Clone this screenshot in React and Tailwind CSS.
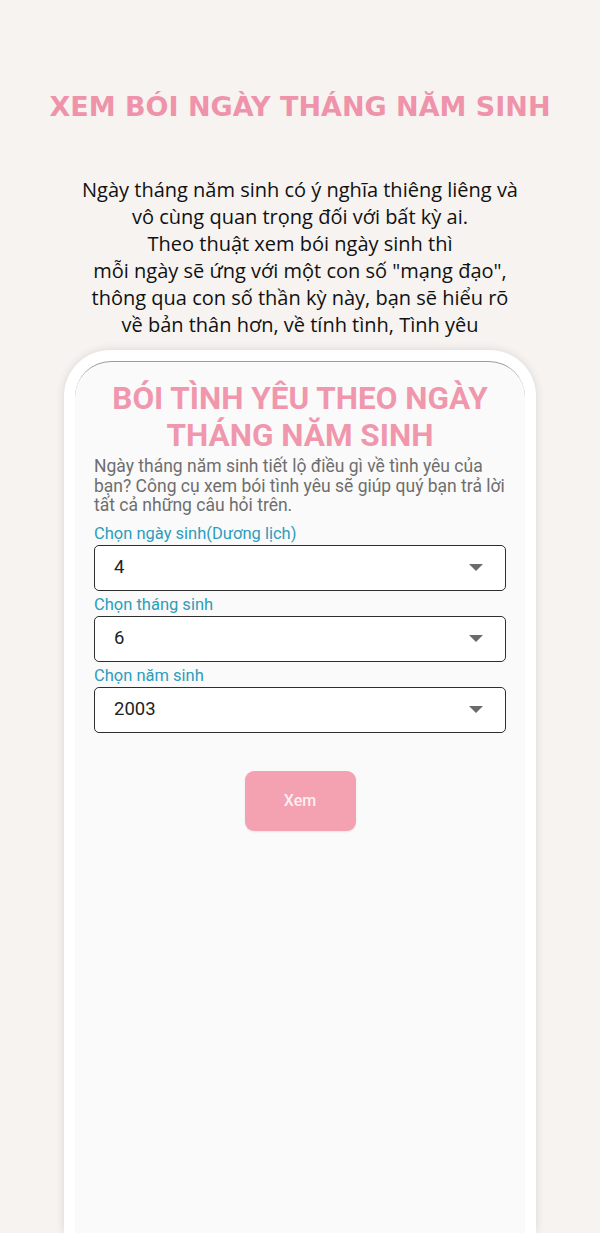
import React from 'react';

const fields = [
    { label: 'Chọn ngày sinh(Dương lịch)', value: '4' },
    { label: 'Chọn tháng sinh', value: '6' },
    { label: 'Chọn năm sinh', value: '2003' },
];

const intro = [
    'Ngày tháng năm sinh có ý nghĩa thiêng liêng và',
    'vô cùng quan trọng đối với bất kỳ ai.',
    'Theo thuật xem bói ngày sinh thì',
    'mỗi ngày sẽ ứng với một con số "mạng đạo",',
    'thông qua con số thần kỳ này, bạn sẽ hiểu rõ',
    'về bản thân hơn, về tính tình, Tình yêu',
];

const SelectBox = ({ label, value }) => (
    <div className="flex flex-col">
        <span className="text-[16.5px] leading-[20px] text-[#2b9dbd]">{label}</span>
        <div className="mt-[1px] h-[46px] flex items-center justify-between rounded-[5px] border-[1.5px] border-[#2e2e2e] bg-white pl-[19px] pr-[22px]">
            <span className="text-[18.5px] text-[#222]">{value}</span>
            <svg width="14" height="7" viewBox="0 0 14 7">
                <path d="M0 0 L14 0 L7 7 Z" fill="#6b6b6b" />
            </svg>
        </div>
    </div>
);

export default function App() {
    return (
        <div className="min-h-[1233px] h-[1233px] overflow-hidden bg-[#f6f3f1] flex flex-col items-center">
            <h1
                className="mt-[90px] text-[27px] leading-[34px] font-bold text-[#ef93ab]"
                style={{ fontFamily: '"Comic Sans MS", "DejaVu Sans", sans-serif' }}
            >
                XEM BÓI NGÀY THÁNG NĂM SINH
            </h1>

            <div
                className="mt-[52px] text-center text-[20px] leading-[27px] text-[#111]"
                style={{ fontFamily: '"Open Sans", sans-serif' }}
            >
                {intro.map((line) => (
                    <p key={line}>{line}</p>
                ))}
            </div>

            {/* phone frame */}
            <div className="mt-[12px] w-[472px] flex-1 rounded-t-[46px] bg-white px-[11px] pt-[11px] shadow-[0_0_10px_rgba(0,0,0,0.12)]">
                <div
                    className="h-full rounded-t-[36px] border-t border-[#9c9c9c] bg-[#fafafa] px-[19px] pt-[18px]"
                    style={{ fontFamily: 'Roboto, sans-serif' }}
                >
                    <h2 className="text-center text-[31.5px] leading-[37px] font-bold text-[#f097ad]">
                        BÓI TÌNH YÊU THEO NGÀY
                        <br />
                        THÁNG NĂM SINH
                    </h2>
                    <p className="mt-[3px] text-[17.5px] leading-[19.5px] text-[#6e6e6e]">
                        Ngày tháng năm sinh tiết lộ điều gì về tình yêu của bạn? Công cụ xem bói tình yêu sẽ giúp quý bạn trả lời tất cả những câu hỏi trên.
                    </p>
                    <div className="mt-[8px] flex flex-col gap-[4px]">
                        {fields.map((f) => (
                            <SelectBox key={f.label} label={f.label} value={f.value} />
                        ))}
                    </div>
                    <div className="mt-[38px] flex justify-center">
                        <button className="h-[60px] w-[111px] rounded-[9px] bg-[#f4a1b1] text-[16px] font-medium text-[#fdf0f3] shadow-[0_1px_2px_rgba(0,0,0,0.08)]">
                            Xem
                        </button>
                    </div>
                </div>
            </div>
        </div>
    );
}
